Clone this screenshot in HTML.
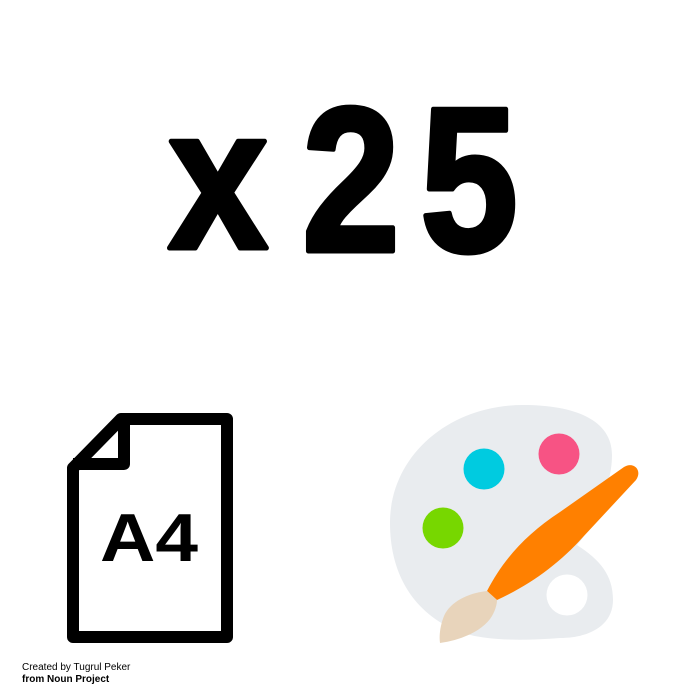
<!DOCTYPE html>
<html><head><meta charset="utf-8"><style>
html,body{margin:0;padding:0;background:#fff;}
svg{display:block;}
</style></head><body>
<svg width="700" height="700" viewBox="0 0 700 700" xmlns="http://www.w3.org/2000/svg">
<g font-family="Liberation Sans, sans-serif" font-weight="bold" fill="#000" stroke="#000" stroke-width="5" stroke-linejoin="round">
<text x="168" y="248" font-size="202" textLength="100" lengthAdjust="spacingAndGlyphs">x</text>
<text x="302" y="251" font-size="206" textLength="98" lengthAdjust="spacingAndGlyphs">2</text>
<text x="420" y="251" font-size="206" textLength="98" lengthAdjust="spacingAndGlyphs">5</text>
</g>
<path d="M73,468 L121,419 L227,419 L227,637 L73,637 Z" fill="none" stroke="#000" stroke-width="12" stroke-linejoin="round"/>
<path d="M124,419 L124,464 L73,464" fill="none" stroke="#000" stroke-width="12" stroke-linejoin="round"/>
<text x="100" y="561" font-family="Liberation Sans, sans-serif" font-weight="bold" font-size="68" textLength="98" lengthAdjust="spacingAndGlyphs">A4</text>
<text x="22" y="670" font-family="Liberation Sans, sans-serif" font-size="10">Created by Tugrul Peker</text>
<text x="22" y="682" font-family="Liberation Sans, sans-serif" font-size="10" font-weight="bold">from Noun Project</text>
<path d="M523,405 C575,405 612,420 612,455 C612,485 595,525 577,545 C600,560 613,575 613,600 C613,625 590,638 560,638 C520,641 480,641 455,630 C410,610 390,570 390,523 C390,455 450,405 523,405 Z" fill="#e9ecef"/>
<circle cx="484" cy="469" r="20.5" fill="#00cbe0"/>
<circle cx="559" cy="454" r="20.5" fill="#f75384"/>
<circle cx="443" cy="528" r="20.5" fill="#77d700"/>
<circle cx="567" cy="595" r="20.5" fill="#fff"/>
<path d="M624,467 C633,461 643,470 636,480 L583,537 C560,563 530,585 497,600 L487,591 C503,560 525,535 560,512 Z" fill="#ff8000"/>
<path d="M487,591 C468,593 450,602 444,616 C440,626 439,636 440,643 C462,640 484,630 492,616 C496,609 497,603 497,600 Z" fill="#e8d4bb"/>
</svg>
</body></html>
